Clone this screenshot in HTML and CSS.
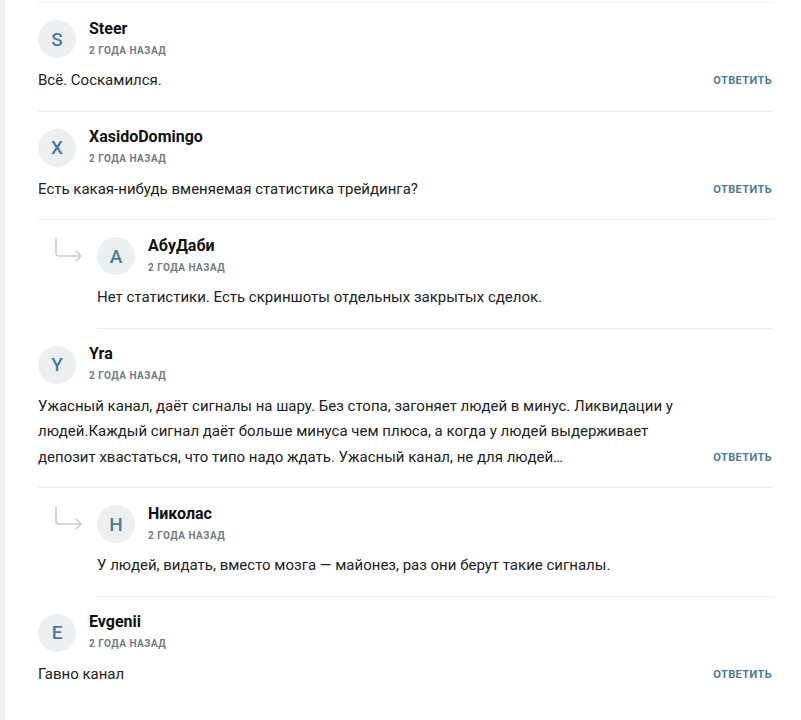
FILE: index.html
```html
<!DOCTYPE html>
<html lang="ru">
<head>
<meta charset="utf-8">
<link rel="stylesheet" href="styles.css">
</head>
<body>
<div class="page">
  <div class="comments">
    <div class="comment">
      <div class="head">
        <div class="avatar">S</div>
        <div class="meta"><div class="name">Steer</div><div class="date">2 года назад</div></div>
      </div>
      <div class="body"><p class="text">Всё. Соскамился.</p><a class="reply-btn">Ответить</a></div>
    </div>

    <div class="comment">
      <div class="head">
        <div class="avatar">X</div>
        <div class="meta"><div class="name">XasidoDomingo</div><div class="date">2 года назад</div></div>
      </div>
      <div class="body"><p class="text">Есть какая-нибудь вменяемая статистика трейдинга?</p><a class="reply-btn">Ответить</a></div>
    </div>

    <div class="reply">
      <svg class="reply-arrow" width="28" height="28" viewBox="0 0 28 28"><path d="M1 1 V15 Q1 18 4 18 H26 M21 13 L26 18 L21 23" fill="none" stroke="#c9cdd1" stroke-width="1.6" stroke-linecap="round" stroke-linejoin="round"/></svg>
      <div class="comment">
        <div class="head">
          <div class="avatar">A</div>
          <div class="meta"><div class="name">АбуДаби</div><div class="date">2 года назад</div></div>
        </div>
        <div class="body"><p class="text">Нет статистики. Есть скриншоты отдельных закрытых сделок.</p></div>
      </div>
    </div>

    <div class="comment">
      <div class="head">
        <div class="avatar">Y</div>
        <div class="meta"><div class="name">Yra</div><div class="date">2 года назад</div></div>
      </div>
      <div class="body"><p class="text">Ужасный канал, даёт сигналы на шару. Без стопа, загоняет людей в минус. Ликвидации у людей.Каждый сигнал даёт больше минуса чем плюса, а когда у людей выдерживает депозит хвастаться, что типо надо ждать. Ужасный канал, не для людей…</p><a class="reply-btn">Ответить</a></div>
    </div>

    <div class="reply">
      <svg class="reply-arrow" width="28" height="28" viewBox="0 0 28 28"><path d="M1 1 V15 Q1 18 4 18 H26 M21 13 L26 18 L21 23" fill="none" stroke="#c9cdd1" stroke-width="1.6" stroke-linecap="round" stroke-linejoin="round"/></svg>
      <div class="comment">
        <div class="head">
          <div class="avatar">H</div>
          <div class="meta"><div class="name">Николас</div><div class="date">2 года назад</div></div>
        </div>
        <div class="body"><p class="text">У людей, видать, вместо мозга — майонез, раз они берут такие сигналы.</p></div>
      </div>
    </div>

    <div class="comment last">
      <div class="head">
        <div class="avatar">E</div>
        <div class="meta"><div class="name">Evgenii</div><div class="date">2 года назад</div></div>
      </div>
      <div class="body"><p class="text">Гавно канал</p><a class="reply-btn">Ответить</a></div>
    </div>
  </div>
</div>
</body>
</html>
```
FILE: styles.css
```css
html, body {
  margin: 0;
  padding: 0;
}
body {
  background: #eef1f3;
  font-family: Roboto, "Liberation Sans", Arial, sans-serif;
  color: #222;
}
.page {
  margin-left: 5px;
  background: #fff;
  min-height: 100vh;
  padding: 2px 29px 0 33px;
  box-sizing: border-box;
}
.comments {
  border-top: 1px solid #ebedef;
  width: 734px;
}
.comment {
  border-bottom: 1px solid #ebedef;
  padding: 17px 0 17px;
  flex: 1;
}
.comment.last {
  border-bottom: none;
}
.head {
  display: flex;
  align-items: center;
  gap: 13px;
}
.avatar {
  width: 38px;
  height: 38px;
  border-radius: 50%;
  background: #ebeff2;
  color: #4a7c99;
  display: flex;
  align-items: center;
  justify-content: center;
  font-size: 19px;
  font-weight: 500;
}
.meta {
  display: flex;
  flex-direction: column;
  gap: 7px;
  margin-top: -2px;
}
.name {
  font-size: 16px;
  font-weight: 700;
  color: #111;
  line-height: 18px;
}
.date {
  font-size: 10px;
  font-weight: 700;
  letter-spacing: 0.5px;
  text-transform: uppercase;
  color: #737b83;
  line-height: 12px;
}
.body {
  display: flex;
  justify-content: space-between;
  align-items: flex-end;
  margin-top: 10px;
}
.text {
  margin: 0;
  font-size: 15px;
  line-height: 25.5px;
  max-width: 650px;
}
.reply-btn {
  font-size: 11px;
  font-weight: 700;
  letter-spacing: 0.4px;
  text-transform: uppercase;
  color: #4a7c99;
  line-height: 25.5px;
  white-space: nowrap;
}
.reply {
  display: flex;
  align-items: flex-start;
  padding-left: 17px;
  gap: 14px;
}
.reply-arrow {
  margin-top: 18px;
  flex: none;
}
```
